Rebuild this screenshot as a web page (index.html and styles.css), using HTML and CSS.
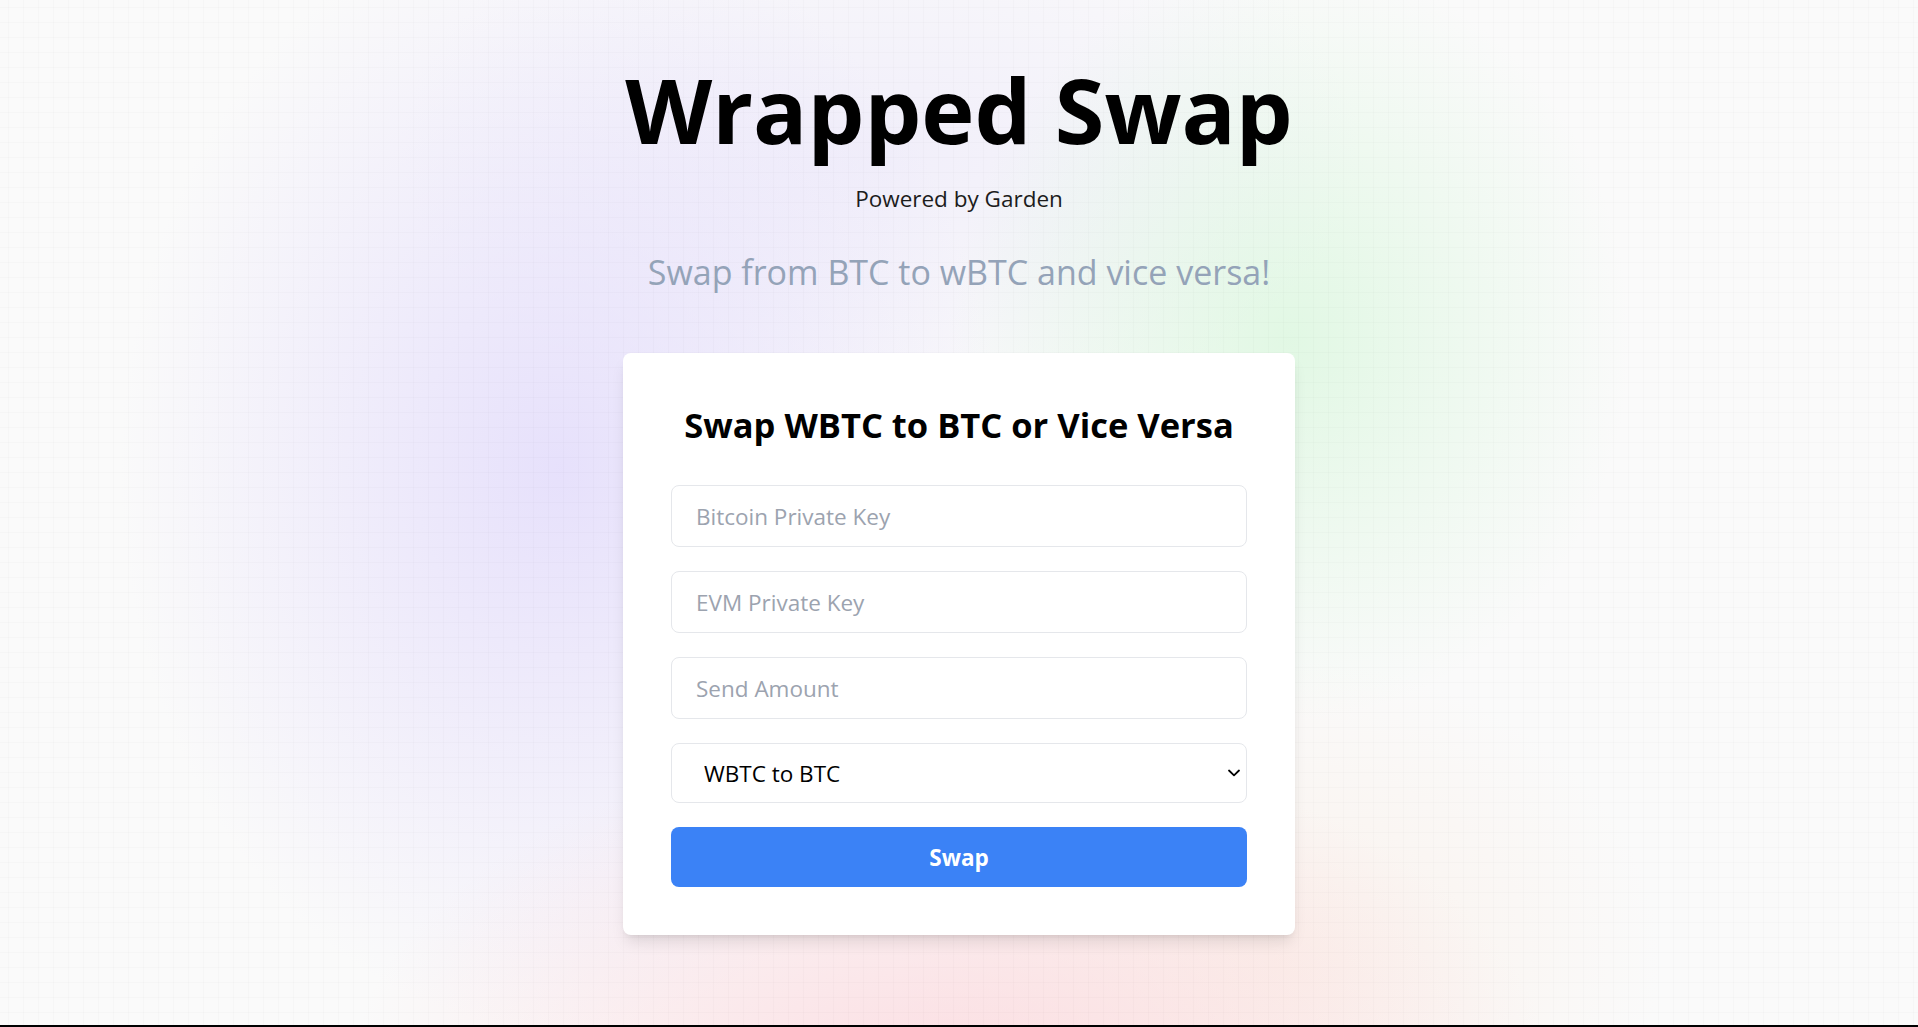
FILE: index.html
```html
<!DOCTYPE html>
<html lang="en">
<head>
<meta charset="utf-8">
<title>Wrapped Swap</title>
<link rel="stylesheet" href="styles.css">
</head>
<body>
<div class="page">
  <header class="hero">
    <h1 class="hero-title">Wrapped Swap</h1>
    <p class="hero-powered">Powered by Garden</p>
    <p class="hero-sub">Swap from BTC to wBTC and vice versa!</p>
  </header>
  <main class="card">
    <h2 class="card-title">Swap WBTC to BTC or Vice Versa</h2>
    <form class="form">
      <input class="field" type="text" placeholder="Bitcoin Private Key">
      <input class="field" type="text" placeholder="EVM Private Key">
      <input class="field" type="text" placeholder="Send Amount">
      <div class="select-wrap">
        <select class="field select">
          <option>WBTC to BTC</option>
          <option>BTC to WBTC</option>
        </select>
        <svg class="chevron" width="12" height="8" viewBox="0 0 12 8" aria-hidden="true"><path d="M1 1.5 L6 6.3 L11 1.5" fill="none" stroke="#000" stroke-width="1.8" stroke-linecap="round" stroke-linejoin="round"/></svg>
      </div>
      <button class="btn" type="button">Swap</button>
    </form>
  </main>
</div>
</body>
</html>
```
FILE: styles.css
```css
* { box-sizing: border-box; }
html, body { margin: 0; padding: 0; }
body {
  font-family: "Open Sans", "Noto Sans", sans-serif;
  color: #000;
}
.page {
  min-height: 100vh;
  border-bottom: 2px solid #000;
  display: flex;
  flex-direction: column;
  align-items: center;
  padding-top: 64px;
  background-color: #fafafa;
  background-image:
    linear-gradient(to right, rgba(0,0,0,0.017) 1px, transparent 1px),
    linear-gradient(to bottom, rgba(0,0,0,0.017) 1px, transparent 1px),
    radial-gradient(ellipse 600px 340px at 950px 1080px, rgba(252,212,218,0.75), rgba(252,212,218,0) 100%),
    radial-gradient(ellipse 340px 380px at 1290px 340px, rgba(205,246,210,0.55), rgba(205,246,210,0) 100%),
    radial-gradient(ellipse 440px 560px at 560px 470px, rgba(224,216,252,0.75), rgba(224,216,252,0) 100%),
    radial-gradient(ellipse 480px 280px at 880px 150px, rgba(236,232,250,0.65), rgba(236,232,250,0) 100%),
    radial-gradient(ellipse 380px 300px at 1280px 960px, rgba(250,236,226,0.6), rgba(250,236,226,0) 100%);
  background-size: 15px 15px, 15px 15px, auto, auto, auto, auto, auto;
  background-position: 8px 7px, 8px 7px, 0 0, 0 0, 0 0, 0 0, 0 0;
  background-repeat: repeat, repeat, no-repeat, no-repeat, no-repeat, no-repeat, no-repeat;
}
.hero {
  display: flex;
  flex-direction: column;
  align-items: center;
}
.hero-title {
  margin: 0;
  font-size: 90px;
  line-height: 90px;
  font-weight: 700;
  color: #000;
}
.hero-powered {
  margin: 29px 0 0;
  font-size: 22.5px;
  line-height: 32px;
  color: #1c1c1c;
}
.hero-sub {
  margin: 37px 0 0;
  font-size: 34px;
  line-height: 40px;
  color: #94a3b8;
}
.card {
  margin-top: 61px;
  width: 672px;
  background: #fff;
  border-radius: 8px;
  padding: 48px;
  box-shadow: 0 10px 15px -3px rgba(0,0,0,0.1), 0 4px 6px -4px rgba(0,0,0,0.1);
}
.card-title {
  margin: 0 0 36px;
  text-align: center;
  font-size: 34.5px;
  line-height: 48px;
  font-weight: 700;
  color: #000;
}
.form {
  display: flex;
  flex-direction: column;
  gap: 24px;
}
.field {
  display: block;
  width: 100%;
  height: 62px;
  padding: 0 24px;
  font-family: inherit;
  font-size: 22.5px;
  color: #000;
  background: #fff;
  border: 1px solid #e5e7eb;
  border-radius: 8px;
  outline: none;
}
.field::placeholder { color: #9ca3af; }
.select-wrap { position: relative; }
.select {
  height: 60px;
  padding: 0 40px 0 32px;
  appearance: none;
  -webkit-appearance: none;
}
.chevron {
  position: absolute;
  right: 7px;
  top: 26px;
  pointer-events: none;
}
.btn {
  display: block;
  width: 100%;
  height: 60px;
  border: none;
  border-radius: 8px;
  background: #3b82f6;
  color: #fff;
  font-family: inherit;
  font-size: 22.5px;
  font-weight: 700;
  cursor: pointer;
}
```
